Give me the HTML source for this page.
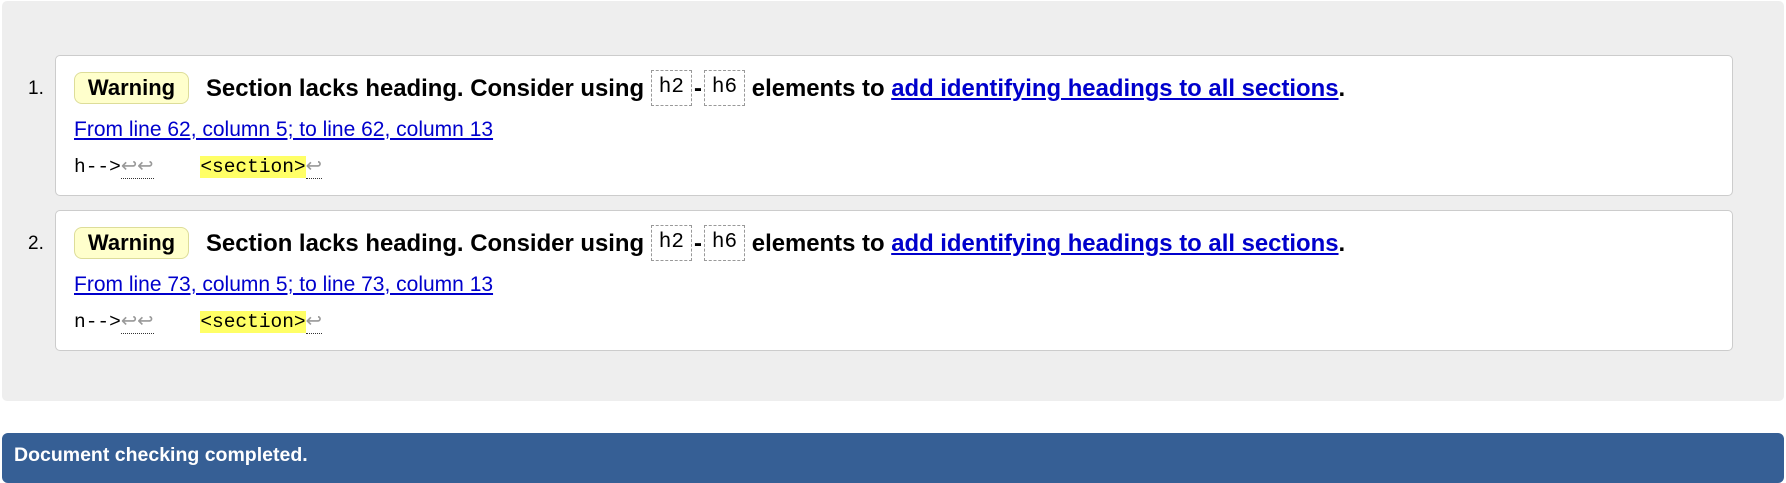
<!DOCTYPE html>
<html><head><meta charset="utf-8"><style>
body{margin:0;width:1786px;height:475px;background:#fff;font-family:"Liberation Sans",sans-serif;position:relative;overflow:hidden}
.gray{position:absolute;left:2px;top:1px;width:1782px;height:400px;background:#eee;border-radius:5px}
.card{position:absolute;left:55px;width:1676px;height:139px;background:#fff;border:1px solid #ccc;border-radius:5px}
.num{position:absolute;left:28px;font-size:19px;color:#000}
.badge{position:absolute;left:18px;top:16px;width:115px;height:32px;background:#ffffcc;border:1px solid #dddd99;border-radius:8px;box-sizing:border-box;font-weight:bold;font-size:22px;line-height:30px;text-align:center}
.msg{position:absolute;left:150px;top:16px;font-size:23.9px;font-weight:bold;line-height:34px;white-space:nowrap}
.code{display:inline-block;border:1px dashed #999;font-family:"Liberation Mono",monospace;font-weight:normal;font-size:21px;padding:0 7px;line-height:34px;vertical-align:middle;margin-top:-4px}
.msg a{color:#0000cc}
.loc{position:absolute;left:18px;top:62px;font-size:21px;color:#0000cc;text-decoration:underline}
.ext{position:absolute;left:18px;top:98px;font-family:"Liberation Mono",monospace;font-size:19.5px;white-space:pre}
.hl{background:#ffff66}
.lf{color:#999;border-bottom:1px dotted #333}
.bar{position:absolute;left:2px;top:433px;width:1782px;height:50px;background:#365f95;border-radius:6px;color:#fff;font-weight:bold;font-size:19.5px;padding:11px 12px;box-sizing:border-box}
.d{margin:0 2px}
</style></head><body>
<div class="gray"></div>
<div class="num" style="top:78px">1.</div>
<div class="card" style="top:55px">
<div class="badge">Warning</div>
<div class="msg">Section lacks heading. Consider using <span class="code">h2</span><span class="d">-</span><span class="code">h6</span> elements to <a href="#">add identifying headings to all sections</a>.</div>
<div class="loc">From line 62, column 5; to line 62, column 13</div>
<div class="ext">h--&gt;<span class="lf">↩↩</span>    <span class="hl">&lt;section&gt;</span><span class="lf">↩</span></div>
</div>
<div class="num" style="top:233px">2.</div>
<div class="card" style="top:210px">
<div class="badge">Warning</div>
<div class="msg">Section lacks heading. Consider using <span class="code">h2</span><span class="d">-</span><span class="code">h6</span> elements to <a href="#">add identifying headings to all sections</a>.</div>
<div class="loc">From line 73, column 5; to line 73, column 13</div>
<div class="ext">n--&gt;<span class="lf">↩↩</span>    <span class="hl">&lt;section&gt;</span><span class="lf">↩</span></div>
</div>
<div class="bar">Document checking completed.</div>
</body></html>
